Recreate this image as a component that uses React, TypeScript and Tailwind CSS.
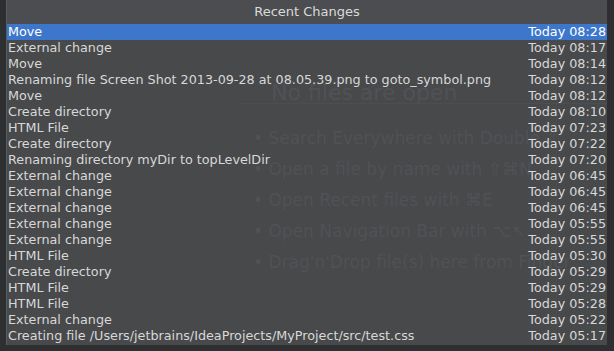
const changes: [string, string][] = [
  ['Move', 'Today 08:28'],
  ['External change', 'Today 08:17'],
  ['Move', 'Today 08:14'],
  ['Renaming file Screen Shot 2013-09-28 at 08.05.39.png to goto_symbol.png', 'Today 08:12'],
  ['Move', 'Today 08:12'],
  ['Create directory', 'Today 08:10'],
  ['HTML File', 'Today 07:23'],
  ['Create directory', 'Today 07:22'],
  ['Renaming directory myDir to topLevelDir', 'Today 07:20'],
  ['External change', 'Today 06:45'],
  ['External change', 'Today 06:45'],
  ['External change', 'Today 06:45'],
  ['External change', 'Today 05:55'],
  ['External change', 'Today 05:55'],
  ['HTML File', 'Today 05:30'],
  ['Create directory', 'Today 05:29'],
  ['HTML File', 'Today 05:29'],
  ['HTML File', 'Today 05:28'],
  ['External change', 'Today 05:22'],
  ['Creating file /Users/jetbrains/IdeaProjects/MyProject/src/test.css', 'Today 05:17'],
]

const hints = [
  'Search Everywhere with Double ⇧',
  'Open a file by name with ⇧⌘N',
  'Open Recent files with ⌘E',
  'Open Navigation Bar with ⌥↖',
  "Drag'n'Drop file(s) here from Finder",
]

export default function App() {
  const selected = 0

  return (
    <div
      className="w-[614px] h-[351px] bg-[#2e2f31] pl-[6px] pr-[7px] pb-[6px] overflow-hidden"
      style={{ fontFamily: '"DejaVu Sans", "Liberation Sans", sans-serif' }}
    >
      <div className="h-full flex flex-col bg-[#47494b] border-l border-[#5a5c5e]">
        <div className="h-[24px] shrink-0 flex items-center justify-center bg-[#4b4d50] text-[13px] text-[#dadada]">
          Recent Changes
        </div>

        <div className="relative flex-1">
          {/* editor placeholder showing through behind the popup */}
          <div className="absolute inset-0 pointer-events-none text-[#505255]">
            <div className="absolute left-[264px] top-[52px] text-[22px]">No files are open</div>
            <div className="absolute left-[232px] right-0 top-[79px] border-t border-[#4c4e50]" />
            <div className="absolute left-[246px] top-[104px] flex flex-col gap-[11px] text-[17px] leading-[20px]">
              {hints.map((h) => (
                <div key={h} className="whitespace-nowrap">• {h}</div>
              ))}
            </div>
          </div>

          <div className="relative flex flex-col">
            {changes.map(([name, time], i) => (
              <div
                key={i}
                className={
                  'h-[16px] flex items-center justify-between pl-[1px] pr-[1px] text-[12.75px] leading-[16px] whitespace-nowrap ' +
                  (i === selected ? 'bg-[#3d77cc] text-white' : 'text-[#d8d8d8]')
                }
              >
                <span>{name}</span>
                <span>{time}</span>
              </div>
            ))}
          </div>
        </div>
      </div>
    </div>
  )
}
